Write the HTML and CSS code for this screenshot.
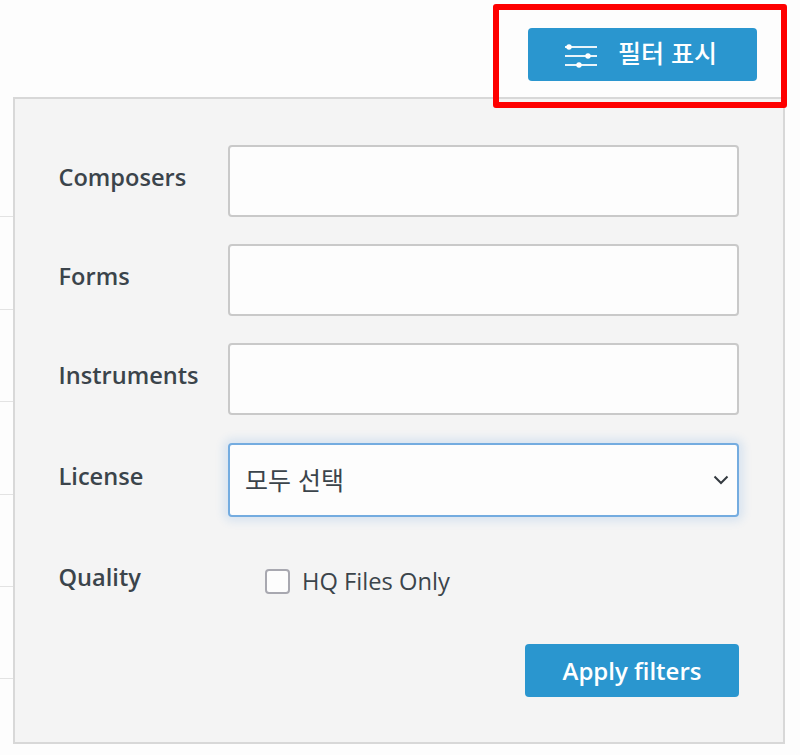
FILE: index.html
```html
<!DOCTYPE html>
<html lang="ko">
<head>
<meta charset="utf-8">
<title>필터 표시</title>
<link rel="stylesheet" href="styles.css">
</head>
<body>
<div class="page">
  <div class="toolbar">
    <button class="btn show-btn" type="button">
      <svg class="sliders" width="34" height="26" viewBox="0 0 34 26" aria-hidden="true">
        <g stroke="#fff" stroke-width="1.8" fill="none">
          <path d="M1 4H33"/><path d="M1 13H33"/><path d="M1 22H33"/>
        </g>
        <g fill="#fff">
          <circle cx="5" cy="4" r="2.7"/><circle cx="24" cy="13" r="2.7"/><circle cx="15" cy="22" r="2.7"/>
        </g>
      </svg>
      <span class="show-text">필터 표시</span>
    </button>
  </div>
  <div class="stage">
    <div class="rows">
      <div class="row"></div><div class="row"></div><div class="row"></div>
      <div class="row"></div><div class="row"></div><div class="row"></div>
    </div>
    <form class="panel">
      <label class="label" for="composers">Composers</label>
      <input class="field" id="composers" type="text">
      <label class="label" for="forms">Forms</label>
      <input class="field" id="forms" type="text">
      <label class="label" for="instruments">Instruments</label>
      <input class="field" id="instruments" type="text">
      <label class="label license" for="license">License</label>
      <div class="select-wrap">
        <select class="field select" id="license"><option>모두 선택</option></select>
        <svg class="chevron" width="16" height="10" viewBox="0 0 16 10" aria-hidden="true"><path d="M1.5 1.5L8 8l6.5-6.5" fill="none" stroke="#343a40" stroke-width="2"/></svg>
      </div>
      <span class="label quality">Quality</span>
      <label class="check"><input class="box" type="checkbox"><span>HQ Files Only</span></label>
      <div class="actions"><button class="btn apply-btn" type="button">Apply filters</button></div>
    </form>
  </div>
  <div class="callout"></div>
</div>
</body>
</html>
```
FILE: styles.css
```css
* { box-sizing: border-box; }
html, body { margin: 0; height: 100%; }
body {
  background: #fdfdfd;
  color: #3b444b;
  font-family: "Open Sans", "Noto Sans CJK KR", sans-serif;
  overflow: hidden;
}
.page { position: relative; width: 800px; height: 755px; }
.toolbar {
  display: flex;
  justify-content: flex-end;
  height: 97px;
  padding: 28px 43px 0 0;
}
.btn {
  background: #2a96cf;
  border: 0;
  border-radius: 4px;
  color: #fff;
  font-family: inherit;
  font-weight: 600;
}
.show-btn {
  display: flex;
  align-items: center;
  width: 229px;
  height: 53px;
  padding: 0 0 0 36px;
  font-family: "Noto Sans CJK KR", sans-serif;
  font-size: 25px;
  font-weight: 500;
}
.show-text { margin-top: -5px; }
.sliders { margin: 3px 20px 0 0; }
.stage { display: flex; }
.rows { width: 13px; padding-top: 28px; }
.row { height: 92.4px; border-bottom: 1.5px solid #e3e3e3; }
.panel {
  width: 772px;
  height: 647px;
  background: #f4f4f4;
  border: 2px solid #d8d8d8;
  padding: 46px 44px 0 43.5px;
  display: grid;
  grid-template-columns: 169.5px 511px;
  grid-template-rows: 72px 72px 72px 75px auto auto;
  row-gap: 27px;
  align-content: start;
}
.label {
  font-size: 23.6px;
  font-weight: 600;
  line-height: 32px;
  padding-top: 16px;
  color: #3b444b;
}
.field {
  display: block;
  width: 100%;
  height: 100%;
  background: #fdfdfd;
  border: 2px solid #c9c9c9;
  border-radius: 4px;
  outline: 0;
}
.license { padding-top: 18px; }
.select-wrap { position: relative; padding-top: 1px; }
.select {
  appearance: none;
  border-color: #74ace0;
  box-shadow: 0 0 10px 4px rgba(40, 130, 220, 0.14);
  padding: 0 0 2px 15px;
  font-family: "Noto Sans CJK KR", "Open Sans", sans-serif;
  font-size: 25px;
  color: #3b444b;
}
.chevron { position: absolute; right: 10px; top: 33px; }
.quality { padding-top: 0; margin-top: 17px; }
.check {
  display: flex;
  align-items: center;
  gap: 12px;
  padding-left: 37px;
  height: 38px;
  margin-top: 18px;
  font-size: 23.7px;
  color: #3b444b;
}
.box {
  appearance: none;
  width: 25px;
  height: 25px;
  margin: 0;
  background: #fdfdfd;
  border: 2px solid #a8a8b0;
  border-radius: 4px;
}
.actions {
  grid-column: 2;
  display: flex;
  justify-content: flex-end;
  margin-top: 17px;
}
.apply-btn { width: 214px; height: 53px; font-size: 24px; padding: 0; }
.callout {
  position: absolute;
  left: 493px;
  top: 4px;
  width: 294px;
  height: 104px;
  border: 6px solid #fe0000;
  border-radius: 3px;
}
```
